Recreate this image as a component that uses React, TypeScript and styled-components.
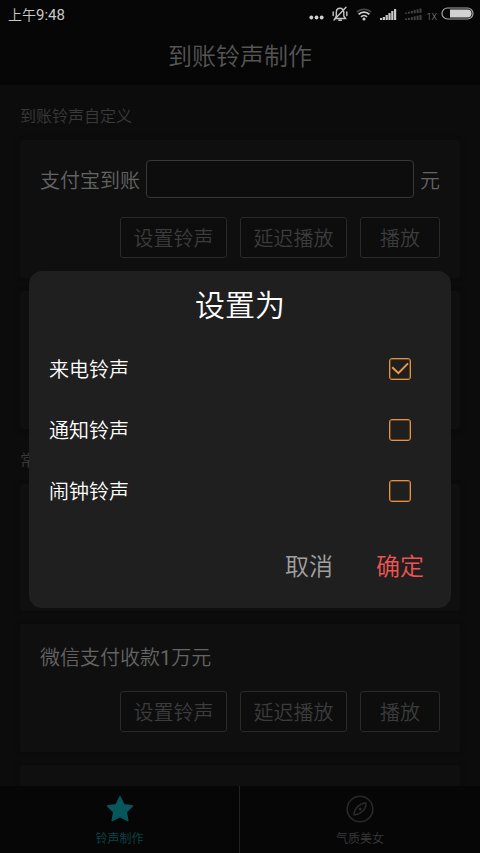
import React, { useState } from "react";
import styled, { createGlobalStyle } from "styled-components";

const GlobalStyle = createGlobalStyle`
  * { box-sizing: border-box; }
  body {
    margin: 0;
    background: #0c0c0c;
    font-family: Roboto, "Noto Sans CJK SC", sans-serif;
    font-weight: 350;
  }
  button, input { font-family: inherit; font-weight: inherit; }
`;

const Screen = styled.div`
  display: flex;
  flex-direction: column;
  height: 100vh;
  background: #0c0c0c;
`;

const StatusBar = styled.div`
  display: flex;
  align-items: center;
  justify-content: space-between;
  flex: none;
  height: 28px;
  padding: 0 6px 0 8px;
  background: #060606;
  color: #c8c8c8;
  font-size: 14px;
`;

const Clock = styled.span`
  font-size: 15px;
  font-weight: 400;
`;

const StatusIcons = styled.div`
  display: flex;
  align-items: center;
  gap: 8px;
  height: 27px;
  align-self: flex-start;
  svg { display: block; }
`;

const NetworkGroup = styled.div`
  display: flex;
  align-items: center;
  gap: 4px;
`;

const NetworkType = styled.span`
  padding-top: 6px;
  font-size: 9px;
  line-height: 10px;
  color: #909090;
`;

const Header = styled.header`
  display: flex;
  align-items: center;
  justify-content: center;
  flex: none;
  height: 57px;
  background: #060606;
`;

const PageTitle = styled.h1`
  margin: 0;
  font-size: 24px;
  line-height: 36px;
  font-weight: inherit;
  color: #555;
`;

const Content = styled.main`
  flex: 1;
  min-height: 0;
  padding: 0 20px;
  overflow-y: auto;
  scrollbar-width: none;
`;

const SectionTitle = styled.h2`
  margin: 0;
  padding: 20px 0 11px;
  font-size: 16px;
  line-height: 24px;
  font-weight: inherit;
  color: #3a3a3a;
`;

const CardList = styled.div`
  display: flex;
  flex-direction: column;
  gap: 13px;
`;

const Card = styled.section<{ $height?: number }>`
  display: flex;
  flex-direction: column;
  gap: 19px;
  min-height: ${(p) => p.$height ?? 0}px;
  padding: 20px;
  border-radius: 3px;
  background: #0f0f0f;
  box-shadow: 0 0 5px #0b0b0b;
`;

const AmountRow = styled.label`
  display: flex;
  align-items: center;
  gap: 6px;
  height: 38px;
  font-size: 20px;
  color: #646464;
`;

const AmountInput = styled.input`
  flex: 1;
  min-width: 0;
  height: 38px;
  padding: 0 10px;
  border: 1px solid #383838;
  border-radius: 4px;
  outline: none;
  background: #0d0d0d;
  color: #646464;
  font-size: 20px;
`;

const CardTitle = styled.h3`
  margin: 0;
  padding-top: 1px;
  font-size: 20px;
  line-height: 27px;
  font-weight: inherit;
  color: #646464;
`;

const Digit = styled.span`
  font-weight: 400;
`;

const ActionRow = styled.div`
  display: grid;
  grid-template-columns: 107px 107px 80px;
  justify-content: end;
  gap: 13px;
`;

const ActionButton = styled.button`
  height: 41px;
  padding: 2px 0 0;
  border: 1px solid #292929;
  border-radius: 3px;
  background: #0d0d0d;
  color: #3c3c3c;
  font-size: 20px;
  line-height: 30px;
`;

const TabBar = styled.nav`
  display: grid;
  grid-template-columns: 1fr 1fr;
  flex: none;
  height: 67px;
  background: #060606;
`;

const Tab = styled.button<{ $active?: boolean }>`
  display: flex;
  flex-direction: column;
  align-items: center;
  justify-content: flex-end;
  gap: 7px;
  padding: 0 0 5px;
  border: 0;
  background: none;
  color: ${(p) => (p.$active ? "#0d464b" : "#3a3a3a")};
  font-size: 12px;
  line-height: 18px;
  &:not(:last-child) { border-right: 1px solid #222; }
  svg { display: block; }
`;

const Overlay = styled.div`
  position: fixed;
  inset: 26px 0 0;
  display: flex;
  align-items: center;
  justify-content: center;
  padding: 0 29px;
`;

const Dialog = styled.form`
  flex: 1;
  padding: 12px 20px 23px;
  border-radius: 13px;
  background: #1f1f1f;
`;

const DialogTitle = styled.h2`
  margin: 0 0 9px;
  font-size: 30px;
  line-height: 46px;
  font-weight: inherit;
  text-align: center;
  color: #fff;
`;

const OptionRow = styled.label`
  display: flex;
  align-items: center;
  justify-content: space-between;
  height: 61px;
  padding-right: 20px;
  color: #fff;
  font-size: 20px;
`;

const CheckHolder = styled.span`
  display: grid;
  & > * { grid-area: 1 / 1; }
  svg {
    display: none;
    pointer-events: none;
  }
  input:checked + svg { display: block; }
`;

const CheckInput = styled.input`
  appearance: none;
  width: 22px;
  height: 22px;
  margin: 0;
  border: 1px solid #e29445;
  border-radius: 3px;
  box-shadow: inset 0 0 0 1px #6b4320;
`;

const DialogActions = styled.div`
  display: flex;
  justify-content: flex-end;
  gap: 43px;
  padding: 28px 7px 0 0;
`;

const DialogButton = styled.button<{ $primary?: boolean }>`
  padding: 0;
  border: 0;
  background: none;
  color: ${(p) => (p.$primary ? "#ee5454" : "#a0a0a0")};
  font-size: 24px;
  line-height: 36px;
`;

const MoreIcon = () => (
  <svg width="15" height="14" viewBox="0 0 15 14" fill="#d0d0d0">
    <circle cx="2.3" cy="10.5" r="1.9" />
    <circle cx="7.5" cy="10.5" r="1.9" />
    <circle cx="12.7" cy="10.5" r="1.9" />
  </svg>
);

const MutedBellIcon = () => (
  <svg width="16" height="16" viewBox="0 0 16 16" fill="none" stroke="#c4c4c4" strokeWidth="1.4" strokeLinecap="round">
    <path d="M3 12.5h10.5L11.8 10V6.5C11.8 4 10.4 2.3 8 2.3S4.3 4 4.3 6.5V10L3 12.5M6.8 14.3h2.6" />
    <path d="M14 1.2L2 14" />
    <path d="M1.2 6v3.5M14.8 6v3.5" />
  </svg>
);

const WifiIcon = () => (
  <svg width="16" height="14" viewBox="0 0 16 14" fill="none">
    <path d="M.8 5.2C4.8 1.2 11.2 1.2 15.2 5.2" stroke="#484848" strokeWidth="1.6" />
    <path d="M2.6 7.3C5.6 4.3 10.4 4.3 13.4 7.3" stroke="#d0d0d0" strokeWidth="1.8" />
    <path d="M5 9.9C6.7 8.2 9.3 8.2 11 9.9" stroke="#d0d0d0" strokeWidth="1.7" />
    <circle cx="8" cy="12" r="1.5" fill="#d0d0d0" />
  </svg>
);

const SignalIcon = () => (
  <svg width="17" height="12" viewBox="0 0 17 12" fill="#c8c8c8">
    {[2, 3, 5, 7, 9, 11].map((h, i) => (
      <rect key={h} x={i * 2.8} y={12 - h} width="2.2" height={h} />
    ))}
  </svg>
);

const WeakSignalIcon = () => (
  <svg width="17" height="12" viewBox="0 0 17 12" fill="#424242">
    {[0, 1, 2, 3, 4, 5].map((i) => (
      <g key={i}>
        <rect x={i * 2.9} y={4.5 - i * 0.8} width="2" height={1.3 + i * 0.6} />
        <rect x={i * 2.9} y={10.5 - i * 0.7} width="2" height={1.5 + i * 0.7} />
      </g>
    ))}
  </svg>
);

const BatteryIcon = () => (
  <svg width="33" height="13" viewBox="0 0 33 13">
    <rect x="1" y="1" width="31" height="11" rx="5.5" fill="none" stroke="#a8a8a8" strokeWidth="1.2" />
    <path d="M9 2.5h17.5a4 4 0 0 1 0 8H9z" fill="#d2d2d2" />
  </svg>
);

const StarIcon = () => (
  <svg width="28" height="28" viewBox="0 0 28 28" fill="#07575d" stroke="#07575d" strokeWidth="1.5" strokeLinejoin="round">
    <path d="M14 1.8l3.9 8 8.6 1.2-6.3 6 1.6 8.7L14 21.600 6.200 25.700l1.600-8.700-6.300-6 8.600-1.200z" />
  </svg>
);

const CompassIcon = () => (
  <svg width="28" height="28" viewBox="0 0 28 28" fill="none" stroke="#292929" strokeWidth="1.6">
    <circle cx="14" cy="14" r="12.8" />
    <path d="M20 8c.2 3.300-1.400 6.400-3.700 8.500C13.800 18.700 11 19.700 8 20c-.1-3.200 1.300-6.100 3.500-8.300C13.800 9.500 16.800 8.100 20 8z" strokeLinejoin="round" />
    <circle cx="14.2" cy="14" r=".8" fill="#292929" />
  </svg>
);

const CheckMark = () => (
  <svg width="22" height="22" viewBox="0 0 22 22" fill="none" stroke="#ee9a44" strokeWidth="2">
    <path d="M3.2 9.200l6.200 6 9.600-9.800" />
  </svg>
);

function Actions() {
  return (
    <ActionRow>
      <ActionButton type="button">设置铃声</ActionButton>
      <ActionButton type="button">延迟播放</ActionButton>
      <ActionButton type="button">播放</ActionButton>
    </ActionRow>
  );
}

const options = ["来电铃声", "通知铃声", "闹钟铃声"];

export default function App() {
  const [selected, setSelected] = useState<string[]>([options[0]]);
  const toggle = (name: string) =>
    setSelected((list) => (list.includes(name) ? list.filter((n) => n !== name) : [...list, name]));

  return (
    <>
      <GlobalStyle />
      <Screen>
        <StatusBar>
          <span>
            上午<Clock>9:48</Clock>
          </span>
          <StatusIcons>
            <MoreIcon />
            <MutedBellIcon />
            <WifiIcon />
            <SignalIcon />
            <NetworkGroup>
              <WeakSignalIcon />
              <NetworkType>1X</NetworkType>
              <BatteryIcon />
            </NetworkGroup>
          </StatusIcons>
        </StatusBar>
        <Header>
          <PageTitle>到账铃声制作</PageTitle>
        </Header>
        <Content>
          <SectionTitle>到账铃声自定义</SectionTitle>
          <CardList>
            <Card>
              <AmountRow>
                支付宝到账
                <AmountInput type="text" inputMode="decimal" />
                元
              </AmountRow>
              <Actions />
            </Card>
            <Card $height={138} />
          </CardList>
          <SectionTitle>常</SectionTitle>
          <CardList>
            <Card $height={127} />
            <Card>
              <CardTitle>
                微信支付收款<Digit>1</Digit>万元
              </CardTitle>
              <Actions />
            </Card>
            <Card $height={127} />
          </CardList>
        </Content>
        <TabBar>
          <Tab type="button" $active>
            <StarIcon />
            铃声制作
          </Tab>
          <Tab type="button">
            <CompassIcon />
            气质美女
          </Tab>
        </TabBar>
      </Screen>
      <Overlay>
        <Dialog role="dialog" aria-labelledby="dialog-title">
          <DialogTitle id="dialog-title">设置为</DialogTitle>
          {options.map((name) => (
            <OptionRow key={name}>
              {name}
              <CheckHolder>
                <CheckInput type="checkbox" checked={selected.includes(name)} onChange={() => toggle(name)} />
                <CheckMark />
              </CheckHolder>
            </OptionRow>
          ))}
          <DialogActions>
            <DialogButton type="button">取消</DialogButton>
            <DialogButton type="button" $primary>
              确定
            </DialogButton>
          </DialogActions>
        </Dialog>
      </Overlay>
    </>
  );
}
